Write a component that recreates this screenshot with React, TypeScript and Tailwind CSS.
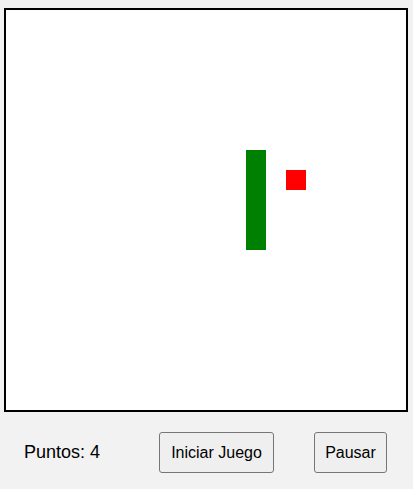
const CELL = 20;

const SNAKE = [
  { x: 12, y: 7 },
  { x: 12, y: 8 },
  { x: 12, y: 9 },
  { x: 12, y: 10 },
  { x: 12, y: 11 },
];
const FOOD = { x: 14, y: 8 };

export default function App() {
  return (
    <div className="min-h-screen w-full bg-[#f2f2f2] flex flex-col items-start pl-[4px] pt-[8px] font-['Liberation_Sans',Arial,sans-serif] text-black">
      {/* Tablero */}
      <div className="border-2 border-black bg-white">
        <svg width={400} height={400} className="block">
          {SNAKE.map((s, i) => (
            <rect key={i} x={s.x * CELL} y={s.y * CELL} width={CELL} height={CELL} fill="#008000" />
          ))}
          <rect x={FOOD.x * CELL} y={FOOD.y * CELL} width={CELL} height={CELL} fill="#ff0000" />
        </svg>
      </div>

      {/* Controles */}
      <div className="w-[404px] flex items-center mt-[20px]">
        <span className="w-[155px] pl-[20px] text-[18px]">Puntos: 4</span>
        <button className="w-[115px] bg-[#efefef] border border-[#767676] rounded-[3px] py-[10px] text-[16px] leading-[19px] text-center">
          Iniciar Juego
        </button>
        <button className="w-[73px] ml-[40px] bg-[#efefef] border border-[#767676] rounded-[3px] py-[10px] text-[16px] leading-[19px] text-center">
          Pausar
        </button>
      </div>
    </div>
  );
}
